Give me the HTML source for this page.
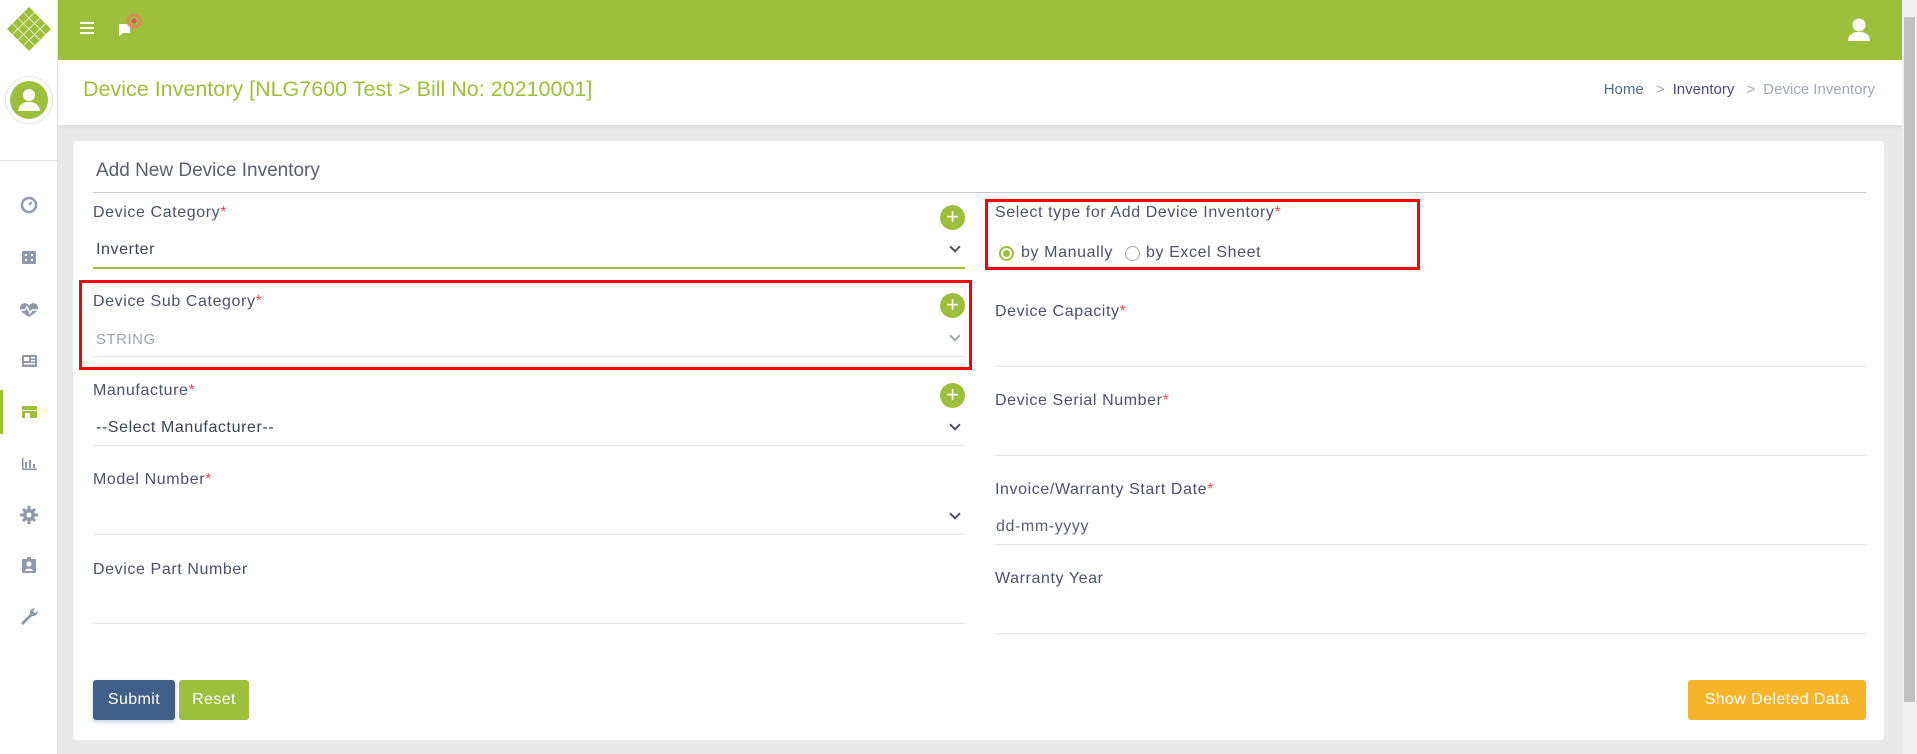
<!DOCTYPE html>
<html><head><meta charset="utf-8"><style>
*{box-sizing:border-box;margin:0;padding:0}
body{width:1917px;height:754px;overflow:hidden;background:#e9e9e9;font-family:"Liberation Sans",sans-serif;position:relative;color:#4a5468}
.abs{position:absolute}
.side{left:0;top:0;width:58px;height:754px;background:#fff;border-right:1px solid #e4e4e4}
.hdr{left:58px;top:0;width:1844px;height:60px;background:#9dbf3b}
.tbar{left:58px;top:60px;width:1844px;height:65px;background:#fff;box-shadow:0 2px 4px rgba(0,0,0,.06)}
.card{left:73px;top:141px;width:1811px;height:599px;background:#fff;border-radius:4px}
.lbl{font-size:16px;color:#4a5468;letter-spacing:.6px}
.lbl i{color:#e84a5f;font-style:normal}
.line{height:1px;background:#e6e6e6}
.val{font-size:16px;color:#3b4252;letter-spacing:.6px}
.plus{width:25px;height:25px;border-radius:50%;background:#9dbf3b;color:#fff;font-size:22px;line-height:24px;text-align:center}
.chev{width:8px;height:8px;border-right:2px solid #4a5060;border-bottom:2px solid #4a5060;transform:rotate(45deg)}
.red{border:3px solid #f00}
.btn{color:#fff;font-size:16px;text-align:center;line-height:40px;border-radius:3px;letter-spacing:.4px}
</style></head><body>
<div class="abs side"></div>
<svg class="abs" style="left:6px;top:6px" width="46" height="46" viewBox="0 0 46 46"><polygon points="23,1 45,23 23,45 1,23" fill="#9dbf3b"/><g stroke="#fff" stroke-width="1" opacity=".7"><line x1="12" y1="12" x2="34" y2="34"/><line x1="17.5" y1="6.5" x2="39.5" y2="28.5"/><line x1="6.5" y1="17.5" x2="28.5" y2="39.5"/><line x1="34" y1="12" x2="12" y2="34"/><line x1="28.5" y1="6.5" x2="6.5" y2="28.5"/><line x1="39.5" y1="17.5" x2="17.5" y2="39.5"/></g></svg>
<div class="abs" style="left:5px;top:76px;width:48px;height:48px;border-radius:50%;border:1px solid #e6e6e6;background:#fff"></div>
<svg class="abs" style="left:10px;top:81px" width="38" height="38" viewBox="0 0 38 38"><circle cx="19" cy="19" r="19" fill="#9dbf3b"/><circle cx="19" cy="14" r="6" fill="#fff"/><path d="M8 30c1-7 6-9 11-9s10 2 11 9z" fill="#fff"/></svg>
<div class="abs" style="left:0;top:160px;width:58px;height:1px;background:#e6e6e6"></div>
<div class="abs" style="left:0;top:390px;width:3px;height:44px;background:#9dbf3b"></div>
<svg class="abs" style="left:15px;top:196px" width="28" height="440" viewBox="0 0 28 440" fill="#8f99a8">
<circle cx="14" cy="9" r="7" fill="none" stroke="#8f99a8" stroke-width="2.5"/><path d="M14 9l3-3" stroke="#8f99a8" stroke-width="2"/>
<rect x="7" y="55" width="14" height="13" rx="1"/><g fill="#fff"><rect x="10" y="58" width="2" height="2"/><rect x="16" y="58" width="2" height="2"/><rect x="10" y="63" width="2" height="2"/><rect x="16" y="63" width="2" height="2"/></g>
<path d="M5 112c0-6 8-6 9-2 1-4 9-4 9 2 0 3-4 6-9 9-5-3-9-6-9-9z"/><path d="M4 114h6l2-3 3 6 2-3h7" stroke="#fff" stroke-width="1.5" fill="none"/>
<rect x="7" y="159" width="15" height="12" rx="1"/><g fill="#fff"><rect x="9" y="161" width="5" height="4"/><rect x="16" y="161" width="4" height="1.5"/><rect x="16" y="164" width="4" height="1.5"/><rect x="9" y="167" width="11" height="1.5"/></g>
<g fill="#9dbf3b"><rect x="7" y="210" width="15" height="4"/><rect x="7" y="215" width="15" height="7"/></g><rect x="10" y="217" width="5" height="5" fill="#fff"/>
<path d="M7 262v12h15v-1.5H8.5V262z"/><rect x="10" y="266" width="2" height="6"/><rect x="14" y="264" width="2" height="8"/><rect x="18" y="268" width="2" height="4"/>
<circle cx="14" cy="319" r="6"/><g stroke="#8f99a8" stroke-width="3"><line x1="14" y1="310" x2="14" y2="328"/><line x1="5" y1="319" x2="23" y2="319"/><line x1="8" y1="313" x2="20" y2="325"/><line x1="20" y1="313" x2="8" y2="325"/></g><circle cx="14" cy="319" r="2.5" fill="#fff"/>
<rect x="7" y="363" width="14" height="14" rx="1"/><circle cx="14" cy="368" r="2.5" fill="#fff"/><path d="M10 375c0-3 8-3 8 0z" fill="#fff"/><rect x="12" y="361" width="4" height="3"/>
<path d="M20 412a5 5 0 0 0-5 6l-9 9 2 2 9-9a5 5 0 0 0 6-5l-3 2-2-2 2-3z"/>
</svg>
<div class="abs hdr"></div>
<div class="abs" style="left:80px;top:22px;width:14px;height:2px;background:#fff;box-shadow:0 5px 0 #fff,0 10px 0 #fff"></div>
<svg class="abs" style="left:116px;top:12px" width="30" height="26" viewBox="0 0 30 26"><path d="M3 12h11v9H7l-4 3z" fill="#fff"/><circle cx="18" cy="9" r="6" fill="none" stroke="#d98a56" stroke-width="3"/><circle cx="18" cy="9" r="2.5" fill="#e84a5f"/></svg>
<svg class="abs" style="left:1847px;top:17px" width="24" height="25" viewBox="0 0 24 25"><circle cx="12" cy="8" r="6.5" fill="#fff"/><path d="M1 24c0-6 4-8 8-9h6c4 1 8 3 8 9z" fill="#fff"/></svg>
<div class="abs tbar"></div>
<div class="abs" style="left:83px;top:77px;font-size:21.5px;color:#9dbf3b">Device Inventory [NLG7600 Test &gt; Bill No: 20210001]</div>
<div class="abs" style="right:42px;top:81px;font-size:15px;color:#4a6a8f">Home <span style="color:#aab;margin:0 8px">&gt;</span><span style="color:#4a4e7a">Inventory</span> <span style="color:#aab;margin:0 8px">&gt;</span><span style="color:#a0a8b8">Device Inventory</span></div>
<div class="abs" style="left:1902px;top:0;width:15px;height:754px;background:#f1f1f1"></div>
<div class="abs" style="left:1904px;top:17px;width:11px;height:685px;background:#c1c1c1"></div>
<div class="abs card"></div>
<div class="abs" style="left:96px;top:160px;font-size:19px;color:#5a6070">Add New Device Inventory</div>
<div class="abs" style="left:93px;top:192px;width:1773px;height:1px;background:#c8c8c8"></div>

<div class="abs lbl" style="left:93px;top:204px">Device Category<i>*</i></div>
<div class="abs plus" style="left:940px;top:205px">+</div>
<div class="abs val" style="left:96px;top:241px">Inverter</div>
<div class="abs chev" style="left:951px;top:243px"></div>
<div class="abs" style="left:93px;top:267px;width:872px;height:2px;background:#9dbf3b"></div>

<div class="abs red" style="left:79px;top:280px;width:893px;height:90px"></div>
<div class="abs lbl" style="left:93px;top:293px">Device Sub Category<i>*</i></div>
<div class="abs plus" style="left:940px;top:293px">+</div>
<div class="abs" style="left:96px;top:331px;font-size:15px;color:#a0a4ac;letter-spacing:.5px">STRING</div>
<div class="abs chev" style="left:951px;top:332px;border-color:#a0a8b0"></div>
<div class="abs line" style="left:93px;top:356px;width:872px"></div>

<div class="abs lbl" style="left:93px;top:382px">Manufacture<i>*</i></div>
<div class="abs plus" style="left:940px;top:383px">+</div>
<div class="abs val" style="left:96px;top:419px">--Select Manufacturer--</div>
<div class="abs chev" style="left:951px;top:421px"></div>
<div class="abs line" style="left:93px;top:445px;width:872px"></div>

<div class="abs lbl" style="left:93px;top:471px">Model Number<i>*</i></div>
<div class="abs chev" style="left:951px;top:510px"></div>
<div class="abs line" style="left:93px;top:534px;width:872px"></div>

<div class="abs lbl" style="left:93px;top:561px">Device Part Number</div>
<div class="abs line" style="left:93px;top:623px;width:872px"></div>

<div class="abs red" style="left:985px;top:199px;width:435px;height:71px"></div>
<div class="abs lbl" style="left:995px;top:204px">Select type for Add Device Inventory<i>*</i></div>
<div class="abs" style="left:999px;top:246px;width:15px;height:15px;border-radius:50%;border:2px solid #9dbf3b"></div>
<div class="abs" style="left:1003px;top:250px;width:7px;height:7px;border-radius:50%;background:#9dbf3b"></div>
<div class="abs lbl" style="left:1021px;top:244px">by Manually</div>
<div class="abs" style="left:1125px;top:246px;width:15px;height:15px;border-radius:50%;border:1px solid #aaa"></div>
<div class="abs lbl" style="left:1146px;top:244px">by Excel Sheet</div>

<div class="abs lbl" style="left:995px;top:303px">Device Capacity<i>*</i></div>
<div class="abs line" style="left:995px;top:366px;width:871px"></div>
<div class="abs lbl" style="left:995px;top:392px">Device Serial Number<i>*</i></div>
<div class="abs line" style="left:995px;top:455px;width:871px"></div>
<div class="abs lbl" style="left:995px;top:481px">Invoice/Warranty Start Date<i>*</i></div>
<div class="abs val" style="left:996px;top:518px;color:#5a6070">dd-mm-yyyy</div>
<div class="abs line" style="left:995px;top:544px;width:871px"></div>
<div class="abs lbl" style="left:995px;top:570px">Warranty Year</div>
<div class="abs line" style="left:995px;top:633px;width:871px"></div>

<div class="abs btn" style="left:93px;top:680px;width:82px;height:40px;background:#3f5f87;box-shadow:0 2px 4px rgba(63,95,135,.3)">Submit</div>
<div class="abs btn" style="left:179px;top:680px;width:70px;height:40px;background:#9dbf3b">Reset</div>
<div class="abs btn" style="left:1688px;top:680px;width:178px;height:40px;background:#f7b52c">Show Deleted Data</div>
</body></html>
